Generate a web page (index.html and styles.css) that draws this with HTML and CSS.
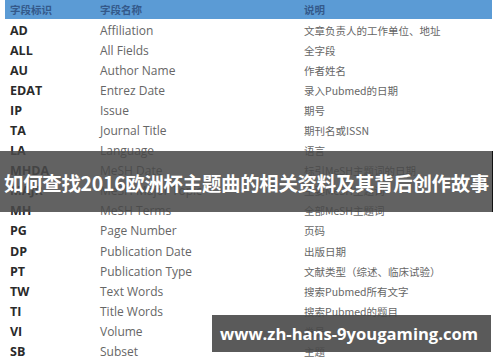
FILE: index.html
```html
<!DOCTYPE html>
<html>
<head>
<meta charset="utf-8">
<link rel="stylesheet" href="styles.css">
</head>
<body>
<div class="page">
  <div class="table">
    <div class="row head"><span>字段标识</span><span>字段名称</span><span>说明</span></div>
    <div class="row"><b>AD</b><span>Affiliation</span><i>文章负责人的工作单位、地址</i></div>
    <div class="row"><b>ALL</b><span>All Fields</span><i>全字段</i></div>
    <div class="row"><b>AU</b><span>Author Name</span><i>作者姓名</i></div>
    <div class="row"><b>EDAT</b><span>Entrez Date</span><i>录入Pubmed的日期</i></div>
    <div class="row"><b>IP</b><span>Issue</span><i>期号</i></div>
    <div class="row"><b>TA</b><span>Journal Title</span><i>期刊名或ISSN</i></div>
    <div class="row"><b>LA</b><span>Language</span><i>语言</i></div>
    <div class="row"><b>MHDA</b><span>MeSH Date</span><i>标引MeSH主题词的日期</i></div>
    <div class="row"><b>MAJR</b><span>MeSH Major Topic</span><i>主要MeSH主题词</i></div>
    <div class="row"><b>MH</b><span>MeSH Terms</span><i>全部MeSH主题词</i></div>
    <div class="row"><b>PG</b><span>Page Number</span><i>页码</i></div>
    <div class="row"><b>DP</b><span>Publication Date</span><i>出版日期</i></div>
    <div class="row"><b>PT</b><span>Publication Type</span><i>文献类型（综述、临床试验）</i></div>
    <div class="row"><b>TW</b><span>Text Words</span><i>搜索Pubmed所有文字</i></div>
    <div class="row"><b>TI</b><span>Title Words</span><i>搜索Pubmed的题目</i></div>
    <div class="row"><b>VI</b><span>Volume</span><i>卷号</i></div>
    <div class="row"><b>SB</b><span>Subset</span><i>主题</i></div>
  </div>
  <div class="banner"><h1>如何查找2016欧洲杯主题曲的相关资料及其背后创作故事</h1></div>
  <div class="site">www.zh-hans-9yougaming.com</div>
</div>
</body>
</html>
```

FILE: styles.css
```css
* { box-sizing: border-box; margin: 0; padding: 0; }
html, body { width: 500px; height: 362px; overflow: hidden; background: #fff; }
body { font-family: "Open Sans", "Noto Sans CJK SC", sans-serif; }
.page { position: relative; width: 500px; height: 362px; }
.table {
  margin-left: 5px;
  width: 487px;
  border-bottom: 1px solid #bdbdbd;
}
.row {
  display: grid;
  grid-template-columns: 90px 204px 1fr;
  padding-left: 5px;
  height: 20.1px;
  align-items: center;
  font-size: 12px;
  color: #666;
}
.row b { font-weight: 700; color: #2a2a2a; font-size: 12.5px; }
.row span { color: #666; }
.row i { font-style: normal; font-family: "Noto Sans CJK SC", sans-serif; font-size: 10.5px; color: #666; }
.row.head {
  height: 19px;
  background: #5b9bd5;
  font-family: "Noto Sans CJK SC", sans-serif;
  font-size: 10.5px;
  font-weight: 700;
  color: #34598a;
  margin-bottom: 1px;
}
.row.head span { color: #34598a; }
.banner {
  position: absolute;
  left: 0;
  top: 151px;
  width: 493px;
  height: 61px;
  background: rgba(72, 72, 72, 0.86);
  border-right: 1.5px solid #111;
  display: flex;
  align-items: center;
  padding-left: 4px;
}
.banner h1 {
  font-family: "Noto Sans CJK SC", sans-serif;
  font-size: 19.4px;
  font-weight: 700;
  color: #fff;
  white-space: nowrap;
  letter-spacing: -0.25px;
  margin-top: 2px;
}
.site {
  position: absolute;
  left: 212px;
  top: 315px;
  width: 279px;
  height: 37px;
  background: rgba(72, 72, 72, 0.9);
  color: #fff;
  font-family: "Open Sans", sans-serif;
  font-weight: 700;
  font-size: 16.6px;
  display: flex;
  align-items: center;
  padding-left: 8px;
  white-space: nowrap;
}
```
